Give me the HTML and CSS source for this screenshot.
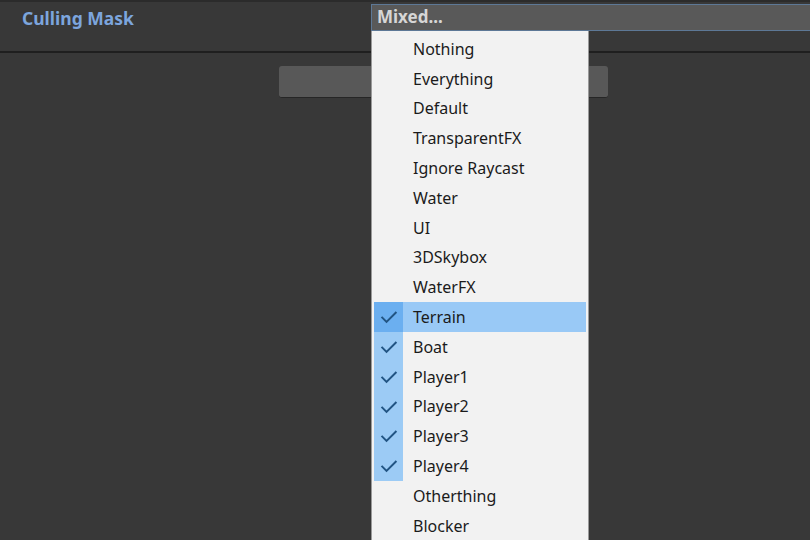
FILE: index.html
```html
<!DOCTYPE html>
<html>
<head>
   <title>Culling Mask</title>
<link rel="stylesheet" href="styles.css">
</head>
<body>

<div class="inspector">
   <div class="prop-row">
      <span class="prop-label">Culling Mask</span>
      <div class="mask-field">Mixed...</div>
   </div>

   <div class="button-row">
      <div class="wide-button"></div>
   </div>
</div>

<!-- dropdown opened over the inspector -->
<div class="mask-menu">
   <ul>
      <li>Nothing</li>
      <li>Everything</li>
      <li>Default</li>
      <li>TransparentFX</li>
      <li>Ignore Raycast</li>
      <li>Water</li>
      <li>UI</li>
      <li>3DSkybox</li>
      <li>WaterFX</li>
      <li class="on hover"><span class="tick"><svg viewBox="0 0 29 30"><path d="M7.5 15 L12.5 20 L22.5 10"/></svg></span>Terrain</li>
      <li class="on"><span class="tick"><svg viewBox="0 0 29 30"><path d="M7.5 15 L12.5 20 L22.5 10"/></svg></span>Boat</li>
      <li class="on"><span class="tick"><svg viewBox="0 0 29 30"><path d="M7.5 15 L12.5 20 L22.5 10"/></svg></span>Player1</li>
      <li class="on"><span class="tick"><svg viewBox="0 0 29 30"><path d="M7.5 15 L12.5 20 L22.5 10"/></svg></span>Player2</li>
      <li class="on"><span class="tick"><svg viewBox="0 0 29 30"><path d="M7.5 15 L12.5 20 L22.5 10"/></svg></span>Player3</li>
      <li class="on"><span class="tick"><svg viewBox="0 0 29 30"><path d="M7.5 15 L12.5 20 L22.5 10"/></svg></span>Player4</li>
      <li>Otherthing</li>
      <li>Blocker</li>
   </ul>
</div>

</body>
</html>
```

FILE: styles.css
```css
html, body {
   margin: 0;
   height: 100%;
   overflow: hidden;
}

body {
   background-color: #383838;
   font-family: "Noto Sans", "DejaVu Sans", sans-serif;
}

.inspector {
   border-top: 2px solid #2b2b2b;
}

.prop-row {
   display: grid;
   grid-template-columns: 371px 1fr;
   height: 49px;
   border-bottom: 2px solid #1f1f1f;
}

.prop-label {
   padding-left: 22px;
   padding-top: 4px;
   color: #7ca5dd;
   font-weight: bold;
   font-size: 17.5px;
}

.mask-field {
   margin-top: 2px;
   height: 25px;
   padding-left: 5px;
   background-color: #595959;
   border: solid #5d7896 1px;
   border-right: none;
   color: #d6d6d6;
   font-weight: bold;
   font-size: 17px;
   line-height: 24px;
}

.button-row {
   padding-top: 13px;
   padding-left: 279px;
}

.wide-button {
   width: 329px;
   height: 31px;
   background-color: #585858;
   border-bottom: 1px solid #262626;
   border-radius: 3px;
}

.mask-menu {
   position: absolute;
   left: 371px;
   top: 31px;
   bottom: 0;
   width: 216px;
   background-color: #f2f2f2;
   border-left: 1px solid #9a9a9a;
   border-right: 1px solid #9a9a9a;
}

.mask-menu ul {
   list-style: none;
   margin: 0;
   padding: 3px 2px 0 2px;
}

.mask-menu li {
   display: flex;
   align-items: center;
   height: 29.8px;
   padding-left: 39px;
   color: #1b1b1b;
   font-size: 16px;
}

.mask-menu li.on {
   padding-left: 0;
}

.tick {
   display: block;
   width: 29px;
   height: 100%;
   margin-right: 10px;
   background-color: #9ccbf5;
}

.tick svg {
   display: block;
   width: 29px;
   height: 100%;
   fill: none;
   stroke: #215483;
   stroke-width: 2;
}

.mask-menu li.hover {
   background-color: #99c9f6;
}

.mask-menu li.hover .tick {
   background-color: #6baff0;
}
```
